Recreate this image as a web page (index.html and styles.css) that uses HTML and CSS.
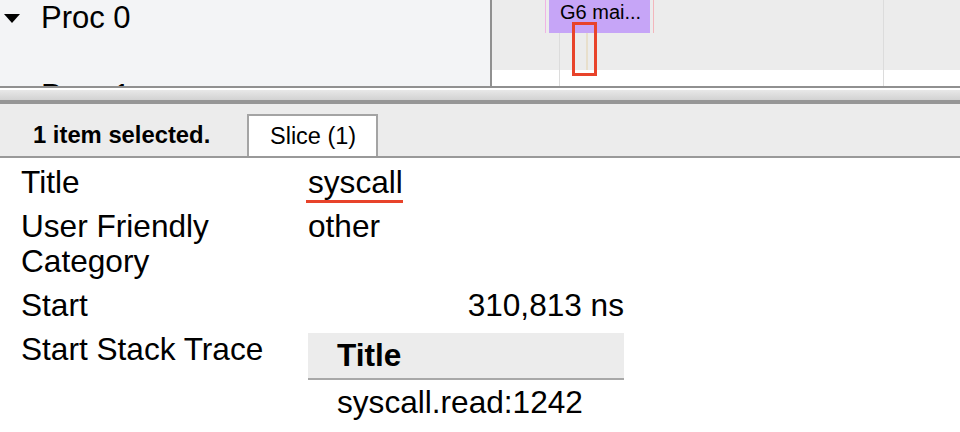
FILE: index.html
```html
<!DOCTYPE html>
<html>
<head>
<meta charset="utf-8">
<link rel="stylesheet" href="styles.css">
</head>
<body>
<div class="timeline">
  <div class="tracks-left">
    <div class="track-label"><span class="tri"></span><span>Proc 0</span></div>
    <div class="track-label"><span class="tri"></span><span>Proc 1</span></div>
  </div>
  <div class="divider"></div>
  <div class="tracks-right">
    <div class="lane">
      <div class="grid-line g1"></div>
      <div class="grid-line g2"></div>
      <div class="edge e1"></div>
      <div class="edge e2"></div>
      <div class="slice">G6 mai...</div>
      <div class="instant"></div>
    </div>
    <div class="lane-foot"></div>
  </div>
</div>
<div class="splitter">
  <div class="sp-line"></div>
  <div class="sp-white"></div>
  <div class="sp-grad"></div>
  <div class="sp-dark"></div>
</div>
<div class="tabbar">
  <span class="sel">1 item selected.</span>
  <span class="tab">Slice (1)</span>
</div>
<div class="details">
  <div class="lbl">Title</div>
  <div class="val">syscall</div>
  <div class="lbl">User Friendly Category</div>
  <div class="val">other</div>
  <div class="lbl">Start</div>
  <div class="val num">310,813 ns</div>
  <div class="lbl">Start Stack Trace</div>
  <div class="val stack-cell">
    <div class="stack">
      <div class="stack-head">Title</div>
      <div class="stack-row">syscall.read:1242</div>
    </div>
  </div>
</div>
<div class="mark-rect"></div>
<div class="mark-line"></div>
</body>
</html>
```

FILE: styles.css
```css
* { box-sizing: border-box; }
html, body { margin: 0; padding: 0; }
body {
  width: 960px;
  height: 432px;
  overflow: hidden;
  background: #fff;
  font-family: "Liberation Sans", Arial, Helvetica, sans-serif;
  color: #000;
  position: relative;
}

.timeline {
  display: flex;
  height: 86px;
  overflow: hidden;
}
.tracks-left {
  width: 490px;
  background: #f3f4f6;
  overflow: hidden;
}
.track-label {
  height: 78px;
  display: flex;
  align-items: flex-start;
  font-size: 31px;
  line-height: 36px;
}
.tri {
  width: 0;
  height: 0;
  margin: 14px 21px 0 4px;
  border-left: 8px solid transparent;
  border-right: 8px solid transparent;
  border-top: 9px solid #000;
}
.divider {
  width: 2px;
  background: #909090;
}
.tracks-right {
  flex: 1;
  display: flex;
  flex-direction: column;
  position: relative;
}
.lane {
  height: 70px;
  background: #ececec;
  position: relative;
}
.lane-foot {
  flex: 1;
  background: #fff;
}
.grid-line {
  position: absolute;
  width: 1px;
  background: #dcdcdc;
}
.g1 { left: 67px; top: 33px; height: 53px; }
.g2 { left: 391px; top: 0; height: 86px; }
.edge {
  position: absolute;
  top: 0;
  width: 1px;
  height: 33px;
}
.e1 { left: 53px; background: #f0b4e4; }
.e2 { left: 161px; background: #f3b6bc; }
.slice {
  position: absolute;
  left: 57px;
  top: 0;
  width: 101px;
  height: 33px;
  background: #c6a5f7;
  font-size: 20px;
  line-height: 25px;
  padding-left: 11px;
  white-space: nowrap;
}
.instant {
  position: absolute;
  left: 94px;
  top: 33px;
  width: 2px;
  height: 37px;
  background: #e8dfcc;
}

.splitter {
  display: flex;
  flex-direction: column;
  height: 18px;
}
.sp-line { height: 2px; background: #909090; }
.sp-white { height: 2px; background: #fff; }
.sp-grad { height: 10px; background: linear-gradient(#e8e8e8, #d2d2d2); }
.sp-dark { height: 4px; background: #969696; }

.tabbar {
  height: 54px;
  background: #ececec;
  border-bottom: 2px solid #999;
  display: flex;
  align-items: flex-end;
  padding-left: 33px;
}
.sel {
  font-weight: bold;
  font-size: 23.8px;
  line-height: 26px;
  align-self: center;
  margin-top: 10px;
  width: 214px;
}
.tab {
  width: 131px;
  height: 42px;
  background: #fff;
  border: 2px solid #a4a4a4;
  border-bottom: none;
  font-size: 23.5px;
  line-height: 40px;
  padding-left: 21px;
}

.details {
  display: grid;
  grid-template-columns: 287px 316px;
  padding-left: 21px;
  margin-top: 2px;
  font-size: 31.6px;
  line-height: 35px;
}
.lbl, .val {
  padding: 5px 0 4px;
}
.lbl { width: 262px; }
.num { text-align: right; }
.stack-cell { padding-top: 6px; }
.stack-head {
  background: #ececec;
  border-bottom: 2px solid #a8a8a8;
  font-weight: bold;
  height: 47px;
  line-height: 45px;
  padding-left: 29px;
}
.stack-row {
  padding: 5px 0 5px 29px;
}

.mark-rect {
  position: absolute;
  left: 572px;
  top: 22px;
  width: 25px;
  height: 54px;
  border: 3px solid #e8432a;
}
.mark-line {
  position: absolute;
  left: 306px;
  top: 200px;
  width: 97px;
  height: 3px;
  background: #e8432a;
}
```
